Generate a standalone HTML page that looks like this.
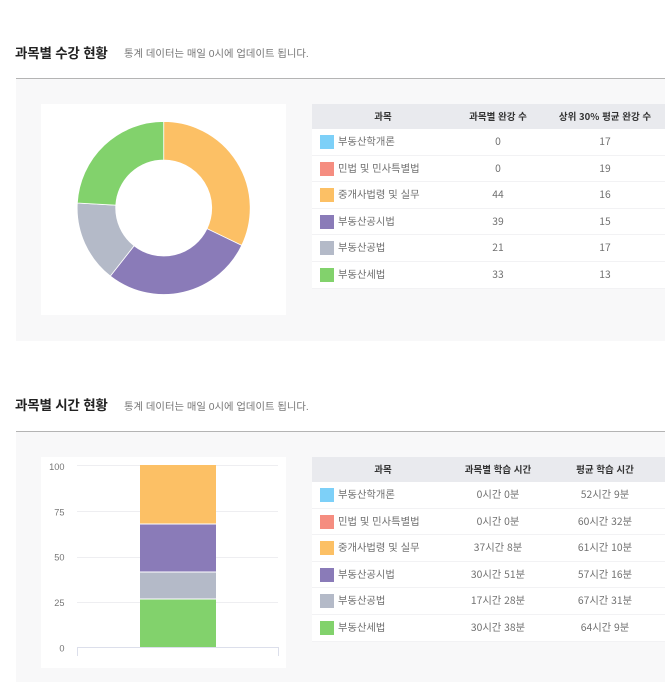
<!DOCTYPE html>
<html lang="ko">
<head>
<meta charset="utf-8">
<title>과목별 현황</title>
<style>
html,body{margin:0;padding:0;background:#fff}
body{width:665px;height:682px;position:relative;overflow:hidden;font-family:"Liberation Sans","Noto Sans CJK KR",sans-serif;color:#555}
#wrap{position:absolute;left:0;top:0;width:665px;height:682px;filter:blur(.35px)}
.a{position:absolute}
.h{left:15px;font-size:13.5px;font-weight:700;color:#222;line-height:20px;white-space:nowrap;letter-spacing:-.2px}
.s{left:124px;font-size:10.35px;color:#777;line-height:16px;white-space:nowrap}
.l{left:16px;width:649px;height:1px;background:#b4b4b4}
.p{left:16px;width:649px;background:#f8f8f9}
.w{left:41px;width:245px;height:211px;background:#fff}
.t{left:312px;width:353px;height:184px;background:#fff}
.th{position:absolute;left:0;top:0;width:353px;height:25px;background:#e9eaee}
.r{position:absolute;left:0;width:353px;height:26.6px;box-sizing:border-box;border-bottom:1px solid #f2f2f4}
.th span,.r span{position:absolute;white-space:nowrap;text-align:center;width:110px;top:0}
.th span{font-family:"Noto Sans CJK KR","Liberation Sans",sans-serif;font-size:9.5px;font-weight:700;color:#333;line-height:24px}
.r span{font-family:"Noto Sans CJK KR","Liberation Sans",sans-serif;font-size:10.3px;color:#707070;line-height:23px}
.th .c1{left:16px}
.c2{left:131px}
.c3{left:238px}
.r .n{left:26px;width:auto;text-align:left;color:#707070}
.r i{position:absolute;left:8px;top:6px;width:14px;height:14px}
svg text{font-family:"Liberation Sans",sans-serif;font-size:9.2px;fill:#777}
</style>
</head>
<body>
<div id="wrap">
<div class="a h" style="top:44px">과목별 수강 현황</div>
<div class="a s" style="top:47px">통계 데이터는 매일 0시에 업데이트 됩니다.</div>
<div class="a l" style="top:78px"></div>
<div class="a p" style="top:79px;height:262px"></div>
<div class="a w" style="top:104px"></div>
<svg class="a" style="left:0;top:0" width="665" height="682" viewBox="0 0 665 682">
<g stroke="#fff" stroke-width=".8">
<path fill="#fcc065" d="M163.7 121.5A86.5 86.5 0 0 1 241.7 245.4L207 228.7A48 48 0 0 0 163.7 160Z"/>
<path fill="#8a7bb8" d="M241.7 245.4A86.5 86.5 0 0 1 110.3 276.1L134.1 245.8A48 48 0 0 0 207 228.7Z"/>
<path fill="#b4bac8" d="M110.3 276.1A86.5 86.5 0 0 1 77.3 203L115.8 205.2A48 48 0 0 0 134.1 245.8Z"/>
<path fill="#82d26c" d="M77.3 203A86.5 86.5 0 0 1 163.7 121.5V160A48 48 0 0 0 115.8 205.2Z"/>
</g>
</svg>
<div class="a t" style="top:104px">
<div class="th"><span class="c1">과목</span><span class="c2">과목별 완강 수</span><span class="c3">상위 30% 평균 완강 수</span></div>
<div class="r" style="top:25px"><i style="background:#7dd0f8"></i><span class="n">부동산학개론</span><span class="c2">0</span><span class="c3">17</span></div>
<div class="r" style="top:51.6px"><i style="background:#f58d80"></i><span class="n">민법 및 민사특별법</span><span class="c2">0</span><span class="c3">19</span></div>
<div class="r" style="top:78.2px"><i style="background:#fcc065"></i><span class="n">중개사법령 및 실무</span><span class="c2">44</span><span class="c3">16</span></div>
<div class="r" style="top:104.8px"><i style="background:#8a7bb8"></i><span class="n">부동산공시법</span><span class="c2">39</span><span class="c3">15</span></div>
<div class="r" style="top:131.4px"><i style="background:#b4bac8"></i><span class="n">부동산공법</span><span class="c2">21</span><span class="c3">17</span></div>
<div class="r" style="top:158px"><i style="background:#82d26c"></i><span class="n">부동산세법</span><span class="c2">33</span><span class="c3">13</span></div>
</div>

<div class="a h" style="top:396px">과목별 시간 현황</div>
<div class="a s" style="top:400px">통계 데이터는 매일 0시에 업데이트 됩니다.</div>
<div class="a l" style="top:431px"></div>
<div class="a p" style="top:432px;height:250px"></div>
<div class="a w" style="top:457px"></div>
<svg class="a" style="left:0;top:0" width="665" height="682" viewBox="0 0 665 682">
<g stroke="#eeeef1" stroke-width="1">
<path d="M77 465.5H278M77 511.5H278M77 557.5H278M77 602.5H278"/>
</g>
<path d="M77.5 656V647.5H278.5V656" fill="none" stroke="#dcdfeb" stroke-width="1"/>
<rect x="140" y="465" width="76" height="58.5" fill="#fcc065"/>
<rect x="140" y="524.5" width="76" height="47" fill="#8a7bb8"/>
<rect x="140" y="572.5" width="76" height="26" fill="#b4bac8"/>
<rect x="140" y="599.5" width="76" height="47.5" fill="#82d26c"/>
<text x="64.5" y="470" text-anchor="end">100</text>
<text x="64.5" y="515.5" text-anchor="end">75</text>
<text x="64.5" y="560.5" text-anchor="end">50</text>
<text x="64.5" y="606" text-anchor="end">25</text>
<text x="64.5" y="651.5" text-anchor="end">0</text>
</svg>
<div class="a t" style="top:457px">
<div class="th"><span class="c1">과목</span><span class="c2">과목별 학습 시간</span><span class="c3">평균 학습 시간</span></div>
<div class="r" style="top:25px"><i style="background:#7dd0f8"></i><span class="n">부동산학개론</span><span class="c2">0시간 0분</span><span class="c3">52시간 9분</span></div>
<div class="r" style="top:51.6px"><i style="background:#f58d80"></i><span class="n">민법 및 민사특별법</span><span class="c2">0시간 0분</span><span class="c3">60시간 32분</span></div>
<div class="r" style="top:78.2px"><i style="background:#fcc065"></i><span class="n">중개사법령 및 실무</span><span class="c2">37시간 8분</span><span class="c3">61시간 10분</span></div>
<div class="r" style="top:104.8px"><i style="background:#8a7bb8"></i><span class="n">부동산공시법</span><span class="c2">30시간 51분</span><span class="c3">57시간 16분</span></div>
<div class="r" style="top:131.4px"><i style="background:#b4bac8"></i><span class="n">부동산공법</span><span class="c2">17시간 28분</span><span class="c3">67시간 31분</span></div>
<div class="r" style="top:158px"><i style="background:#82d26c"></i><span class="n">부동산세법</span><span class="c2">30시간 38분</span><span class="c3">64시간 9분</span></div>
</div>
</div>
</body>
</html>
